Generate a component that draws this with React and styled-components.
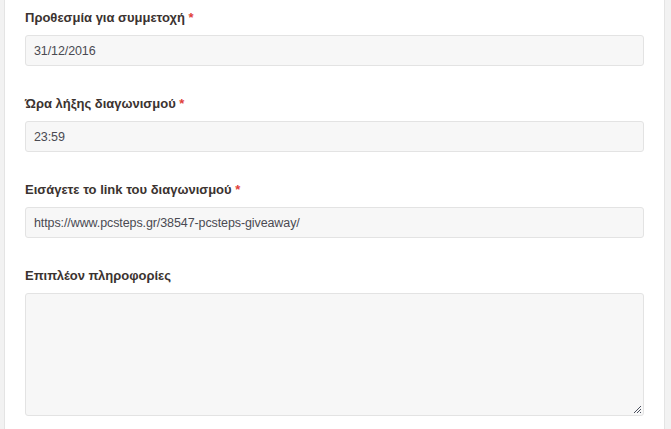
import React from 'react';
import styled, { createGlobalStyle } from 'styled-components';

const Global = createGlobalStyle`
  html, body { margin: 0; padding: 0; background: #f2f2f2; }
  body { font-family: "Liberation Sans", Arial, sans-serif; }
`;

const Page = styled.div`
  display: flex;
  height: 429px;
  overflow: hidden;
`;

const Gutter = styled.div`
  width: ${p => p.w}px;
  flex: none;
  background: #f2f2f2;
  border-${p => p.side}: 1px solid #e4e4e4;
`;

const Panel = styled.div`
  flex: 1;
  background: #fff;
  padding: 10px 20px 0 20px;
`;

const Field = styled.div`
  display: flex;
  flex-direction: column;
  margin-bottom: 30px;
`;

const Label = styled.label`
  font-size: 13px;
  font-weight: bold;
  color: #3b3330;
  line-height: 16px;
  margin-bottom: 9px;
`;

const Req = styled.span`
  color: #e0403a;
`;

const Input = styled.div`
  box-sizing: border-box;
  height: 31px;
  background: #f7f7f7;
  border: 1px solid #e3e3e3;
  border-radius: 3px;
  padding: 0 8px;
  display: flex;
  align-items: center;
  font-size: 12.5px;
  letter-spacing: -0.1px;
  color: #4a4a52;
`;

const Area = styled.div`
  position: relative;
  height: 123px;
  box-sizing: border-box;
  background: #f7f7f7;
  border: 1px solid #e3e3e3;
  border-radius: 3px;
`;

const Grip = styled.svg`
  position: absolute;
  right: 1px;
  bottom: 1px;
`;

const fields = [
  { label: 'Προθεσμία για συμμετοχή', value: '31/12/2016', required: true },
  { label: 'Ώρα λήξης διαγωνισμού', value: '23:59', required: true },
  { label: 'Εισάγετε το link του διαγωνισμού', value: 'https://www.pcsteps.gr/38547-pcsteps-giveaway/', required: true },
];

export default function App() {
  return (
    <Page>
      <Global />
      <Gutter w={4} side="right" />
      <Panel>
        {fields.map(f => (
          <Field key={f.label}>
            <Label>{f.label} {f.required && <Req>*</Req>}</Label>
            <Input>{f.value}</Input>
          </Field>
        ))}
        <Field>
          <Label>Επιπλέον πληροφορίες</Label>
          <Area>
            <Grip width="9" height="9" viewBox="0 0 9 9">
              <path d="M8 1L1 8M8 4L4 8M8 7L7 8" stroke="#4a4f5e" strokeWidth="1" />
            </Grip>
          </Area>
        </Field>
      </Panel>
      <Gutter w={6} side="left" />
    </Page>
  );
}
